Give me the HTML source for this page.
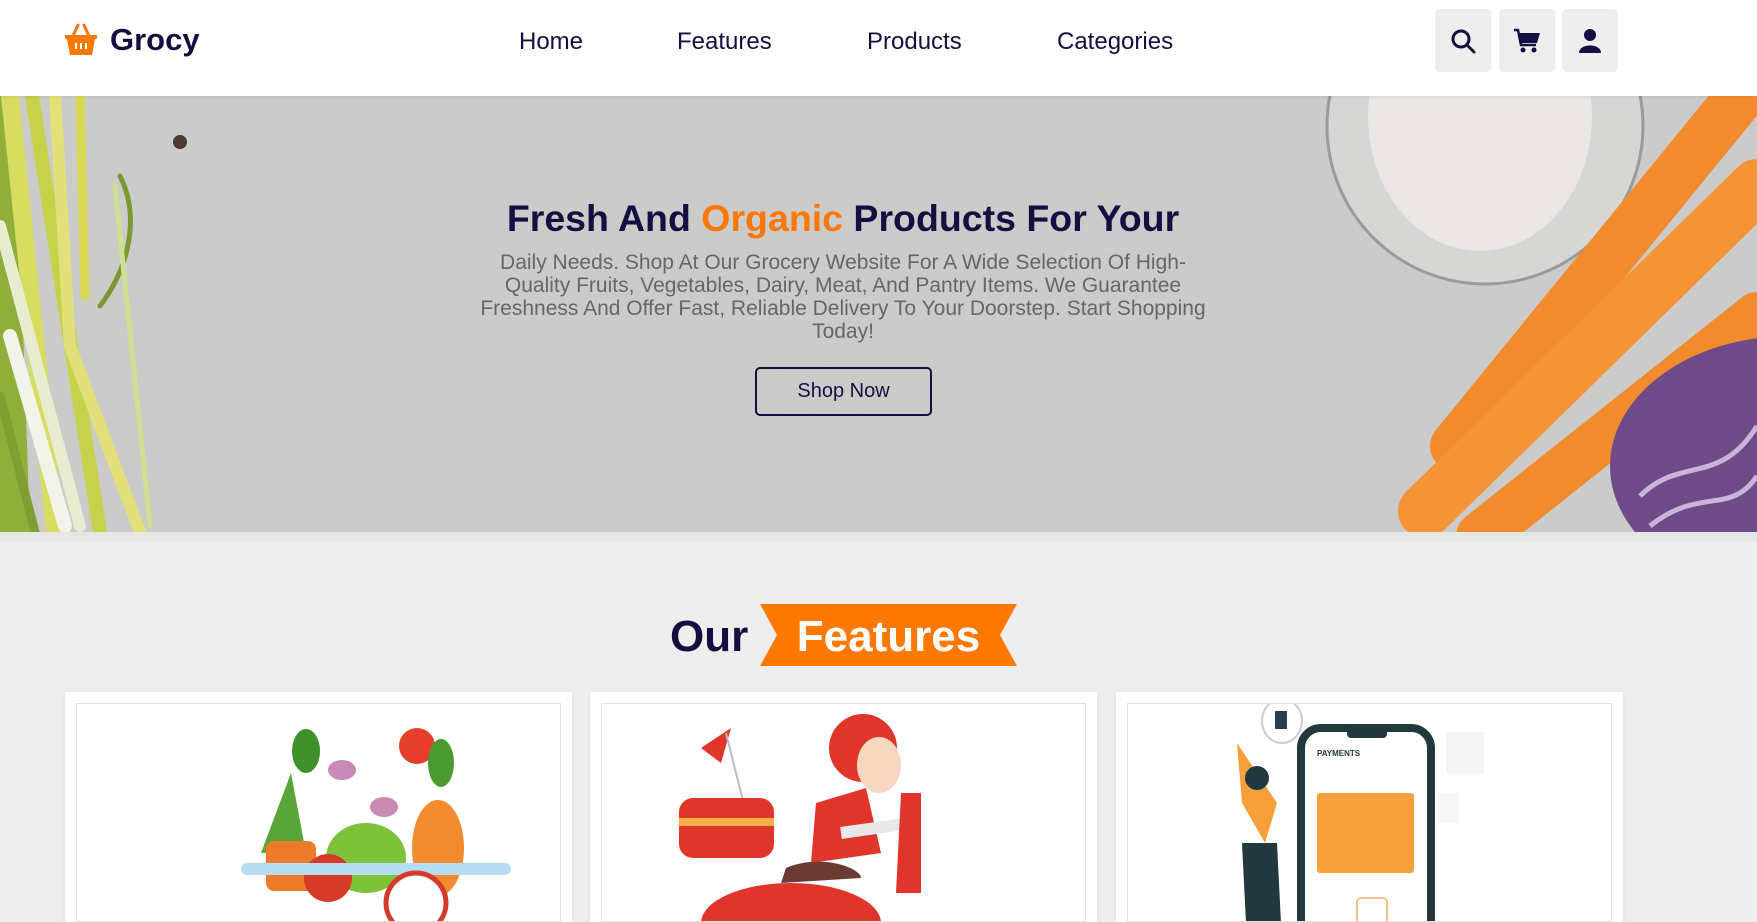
<!DOCTYPE html>
<html><head><meta charset="utf-8">
<style>
*{margin:0;padding:0;box-sizing:border-box}
body{width:1757px;height:905px;overflow:hidden;background:#eeeeee;font-family:"Liberation Sans",Arial,sans-serif;position:relative}
header{position:absolute;left:0;top:0;width:1757px;height:96px;background:#fff;z-index:2;box-shadow:0 1px 4px rgba(0,0,0,.08)}
.logo{position:absolute;left:64px;top:22px;display:flex;align-items:center}
.logo span{font-size:31px;font-weight:bold;color:#130f40;margin-left:12px}
nav a{position:absolute;top:28px;font-size:24px;color:#130f40;text-decoration:none}
.btn{position:absolute;top:9px;width:56px;height:63px;background:#eeeeee;border-radius:5px;display:flex;align-items:center;justify-content:center}
.hero{position:absolute;left:0;top:96px;width:1757px;height:436px;background:#cbcbca;overflow:hidden}
.strip{position:absolute;left:0;top:532px;width:1757px;height:9px;background:#e6e6e4}
h1{position:absolute;left:443px;width:800px;text-align:center;font-size:37.5px;color:#130f40;font-weight:bold}
h1 b{color:#ff7800}
.p{position:absolute;left:393px;width:900px;text-align:center;font-size:21px;line-height:23px;color:#666;white-space:nowrap}
.shop{position:absolute;left:755px;width:177px;height:49px;border:2px solid #130f40;border-radius:5px;font-size:20px;color:#130f40;display:flex;align-items:center;justify-content:center}
.our{position:absolute;left:670px;top:612px;font-size:44px;font-weight:bold;color:#130f40}
.rib{position:absolute;left:760px;top:604px;width:257px;height:62px}
.feat{position:absolute;left:760px;top:612px;width:257px;text-align:center;font-size:44px;font-weight:bold;color:#fff}
.card{position:absolute;top:692px;width:507px;height:230px;background:#fff;box-shadow:0 2px 6px rgba(0,0,0,.06)}
.card .in{position:absolute;left:11px;top:11px;right:11px;bottom:0;border:1px solid #e3e3e3;overflow:hidden}
</style></head><body>
<header>
 <div class="logo">
  <svg width="34" height="34" viewBox="0 0 34 34"><path d="M9 13 L14 2 M25 13 L20 2" stroke="#ff7800" stroke-width="3" stroke-linecap="round"/><path d="M1 12 H33 V16 H31 L28 32 H6 L3 16 H1 Z" fill="#ff7800"/><path d="M12 20v6M17 20v6M22 20v6" stroke="#fff" stroke-width="2"/></svg>
  <span>Grocy</span>
 </div>
 <nav><a style="left:519px">Home</a><a style="left:677px">Features</a><a style="left:867px">Products</a><a style="left:1057px">Categories</a></nav>
 <div class="btn" style="left:1435px"><svg width="26" height="26" viewBox="0 0 26 26"><circle cx="11" cy="11" r="8" fill="none" stroke="#130f40" stroke-width="3"/><path d="M17 17 L24 24" stroke="#130f40" stroke-width="3" stroke-linecap="round"/></svg></div>
 <div class="btn" style="left:1499px"><svg width="28" height="26" viewBox="0 0 28 26"><path d="M1 2 H5 L8 17 H23" fill="none" stroke="#130f40" stroke-width="2.5"/><path d="M6 5 H27 L24 15 H8 Z" fill="#130f40"/><circle cx="10" cy="22" r="2.5" fill="#130f40"/><circle cx="21" cy="22" r="2.5" fill="#130f40"/></svg></div>
 <div class="btn" style="left:1562px"><svg width="24" height="26" viewBox="0 0 24 26"><circle cx="12" cy="7" r="6" fill="#130f40"/><path d="M1 25 C1 15 23 15 23 25 Z" fill="#130f40"/></svg></div>
</header>
<div class="hero">
 <svg width="1757" height="436" style="position:absolute;left:0;top:0">
  <filter id="n"><feTurbulence type="fractalNoise" baseFrequency="0.7" numOctaves="2"/><feColorMatrix values="0 0 0 0 0.5 0 0 0 0 0.5 0 0 0 0 0.5 0 0 0 0.25 0"/></filter>
  <rect width="1757" height="436" fill="#cdcdcc"/>
  <rect width="1757" height="436" filter="url(#n)"/>
  <circle cx="180" cy="46" r="7" fill="#4a3a30"/>
  <g stroke-linecap="round">
   <path d="M120 80 C140 120 130 170 100 210" stroke="#7a9a30" stroke-width="5" fill="none"/>
   <path d="M0 0 L0 436 L30 436 L15 0Z" fill="#8fae3a"/>
   <path d="M10 0 L55 436" stroke="#d8dc60" stroke-width="18"/>
   <path d="M32 0 L100 436" stroke="#c6d24a" stroke-width="14"/>
   <path d="M55 0 L70 250 L140 436" stroke="#e3e07a" stroke-width="12" fill="none"/>
   <path d="M80 0 L85 200" stroke="#d9d850" stroke-width="9"/>
   <path d="M0 130 L80 430" stroke="#e8ecd0" stroke-width="12"/>
   <path d="M10 240 L65 430" stroke="#f2f4ea" stroke-width="14"/>
   <path d="M0 300 L35 436" stroke="#7fa030" stroke-width="9"/>
   <path d="M115 90 L150 430" stroke="#cfe090" stroke-width="5"/>
  </g>
  <ellipse cx="1485" cy="30" rx="158" ry="158" fill="#d6d6d5" stroke="#9a9a9a" stroke-width="3"/>
  <ellipse cx="1480" cy="20" rx="112" ry="135" fill="#ece6e6"/>
  <g stroke-linecap="round" fill="none">
   <path d="M1455 350 L1757 -20" stroke="#f28a2e" stroke-width="50"/>
   <path d="M1425 415 L1757 90" stroke="#f59436" stroke-width="54"/>
   <path d="M1480 440 L1757 220" stroke="#f28a2e" stroke-width="48"/>
  </g>
  <ellipse cx="1790" cy="370" rx="180" ry="130" fill="#6e4b88"/>
  <path d="M1640 400 C1680 360 1720 390 1757 330 M1650 430 C1700 390 1730 420 1757 380" stroke="#c9b5d8" stroke-width="5" fill="none"/>
 </svg>
 <h1 style="top:101px">Fresh And <b>Organic</b> Products For Your</h1>
 <div class="p" style="top:155px">Daily Needs. Shop At Our Grocery Website For A Wide Selection Of High-<br>Quality Fruits, Vegetables, Dairy, Meat, And Pantry Items. We Guarantee<br>Freshness And Offer Fast, Reliable Delivery To Your Doorstep. Start Shopping<br>Today!</div>
 <div class="shop" style="top:271px">Shop Now</div>
</div>
<div class="strip"></div>
<div class="our">Our</div>
<svg class="rib" viewBox="0 0 257 62"><path d="M0 0 H257 L240 31 L257 62 H0 L17 31 Z" fill="#ff7800"/></svg>
<div class="feat">Features</div>
<div class="card" style="left:65px"><div class="in">
 <svg width="485" height="230"><g transform="translate(-11,-11)">
  <ellipse cx="240" cy="58" rx="14" ry="22" fill="#3f8f2a"/><circle cx="351" cy="53" r="18" fill="#e53e2b"/><ellipse cx="375" cy="70" rx="13" ry="24" fill="#4a9a30"/>
  <ellipse cx="276" cy="77" rx="14" ry="10" fill="#c98bb5"/><ellipse cx="318" cy="114" rx="14" ry="10" fill="#c98bb5"/>
  <path d="M195 160 L225 80 L240 160Z" fill="#5aa53a"/><rect x="200" y="148" width="50" height="50" rx="8" fill="#ee7a2c"/>
  <ellipse cx="300" cy="165" rx="40" ry="35" fill="#7ec23a"/><ellipse cx="372" cy="155" rx="26" ry="48" fill="#f28a2e"/>
  <circle cx="262" cy="185" r="24" fill="#d83a28"/>
  <rect x="175" y="170" width="270" height="12" rx="6" fill="#b6dcf2"/>
  <circle cx="350" cy="210" r="30" fill="#fff" stroke="#d43a2a" stroke-width="5"/>
 </g></svg>
</div></div>
<div class="card" style="left:590px"><div class="in">
 <svg width="485" height="230"><g transform="translate(-11,-11)">
  <path d="M110 55 L140 35 L130 70Z" fill="#e0352b"/><path d="M135 40 L160 140" stroke="#bbb" stroke-width="2"/>
  <rect x="88" y="105" width="95" height="60" rx="14" fill="#e0352b"/><rect x="88" y="125" width="95" height="8" fill="#f5b04a"/>
  <ellipse cx="272" cy="55" rx="34" ry="34" fill="#e0352b"/><ellipse cx="288" cy="72" rx="22" ry="28" fill="#f8d7c0"/>
  <path d="M225 110 L275 95 L290 160 L220 170Z" fill="#e0352b"/><path d="M250 140 L320 130" stroke="#e8e8e8" stroke-width="12"/>
  <path d="M195 175 C230 160 270 175 270 185 L190 190Z" fill="#6b3b33"/>
  <path d="M310 100 L330 100 L330 200 L305 200Z" fill="#e0352b"/>
  <ellipse cx="200" cy="230" rx="90" ry="40" fill="#e0352b"/>
 </g></svg>
</div></div>
<div class="card" style="left:1116px"><div class="in">
 <svg width="485" height="230"><g transform="translate(-11,-11)">
  <rect x="184" y="35" width="130" height="230" rx="20" fill="#fff" stroke="#21393e" stroke-width="8"/>
  <rect x="230" y="33" width="40" height="12" rx="4" fill="#21393e"/>
  <text x="200" y="63" font-size="8" font-weight="bold" fill="#21393e" font-family="Liberation Sans">PAYMENTS</text>
  <rect x="200" y="100" width="97" height="80" rx="3" fill="#f5a03a"/>
  <rect x="240" y="205" width="30" height="40" rx="4" fill="none" stroke="#f2c090" stroke-width="2"/>
  <ellipse cx="165" cy="28" rx="20" ry="22" fill="#fff" stroke="#ccc" stroke-width="2"/><rect x="158" y="18" width="12" height="18" fill="#2e3d4a"/>
  <path d="M120 50 L125 110 L148 150 L160 110 Z" fill="#f5a03a"/><circle cx="140" cy="85" r="12" fill="#21393e"/>
  <path d="M125 150 L160 150 L165 250 L130 250Z" fill="#21393e"/>
  <rect x="330" y="40" width="36" height="40" fill="#f5f5f5" stroke="#eee"/>
  <rect x="320" y="100" width="22" height="30" fill="#f7f7f7"/>
 </g></svg>
</div></div>
</body></html>
